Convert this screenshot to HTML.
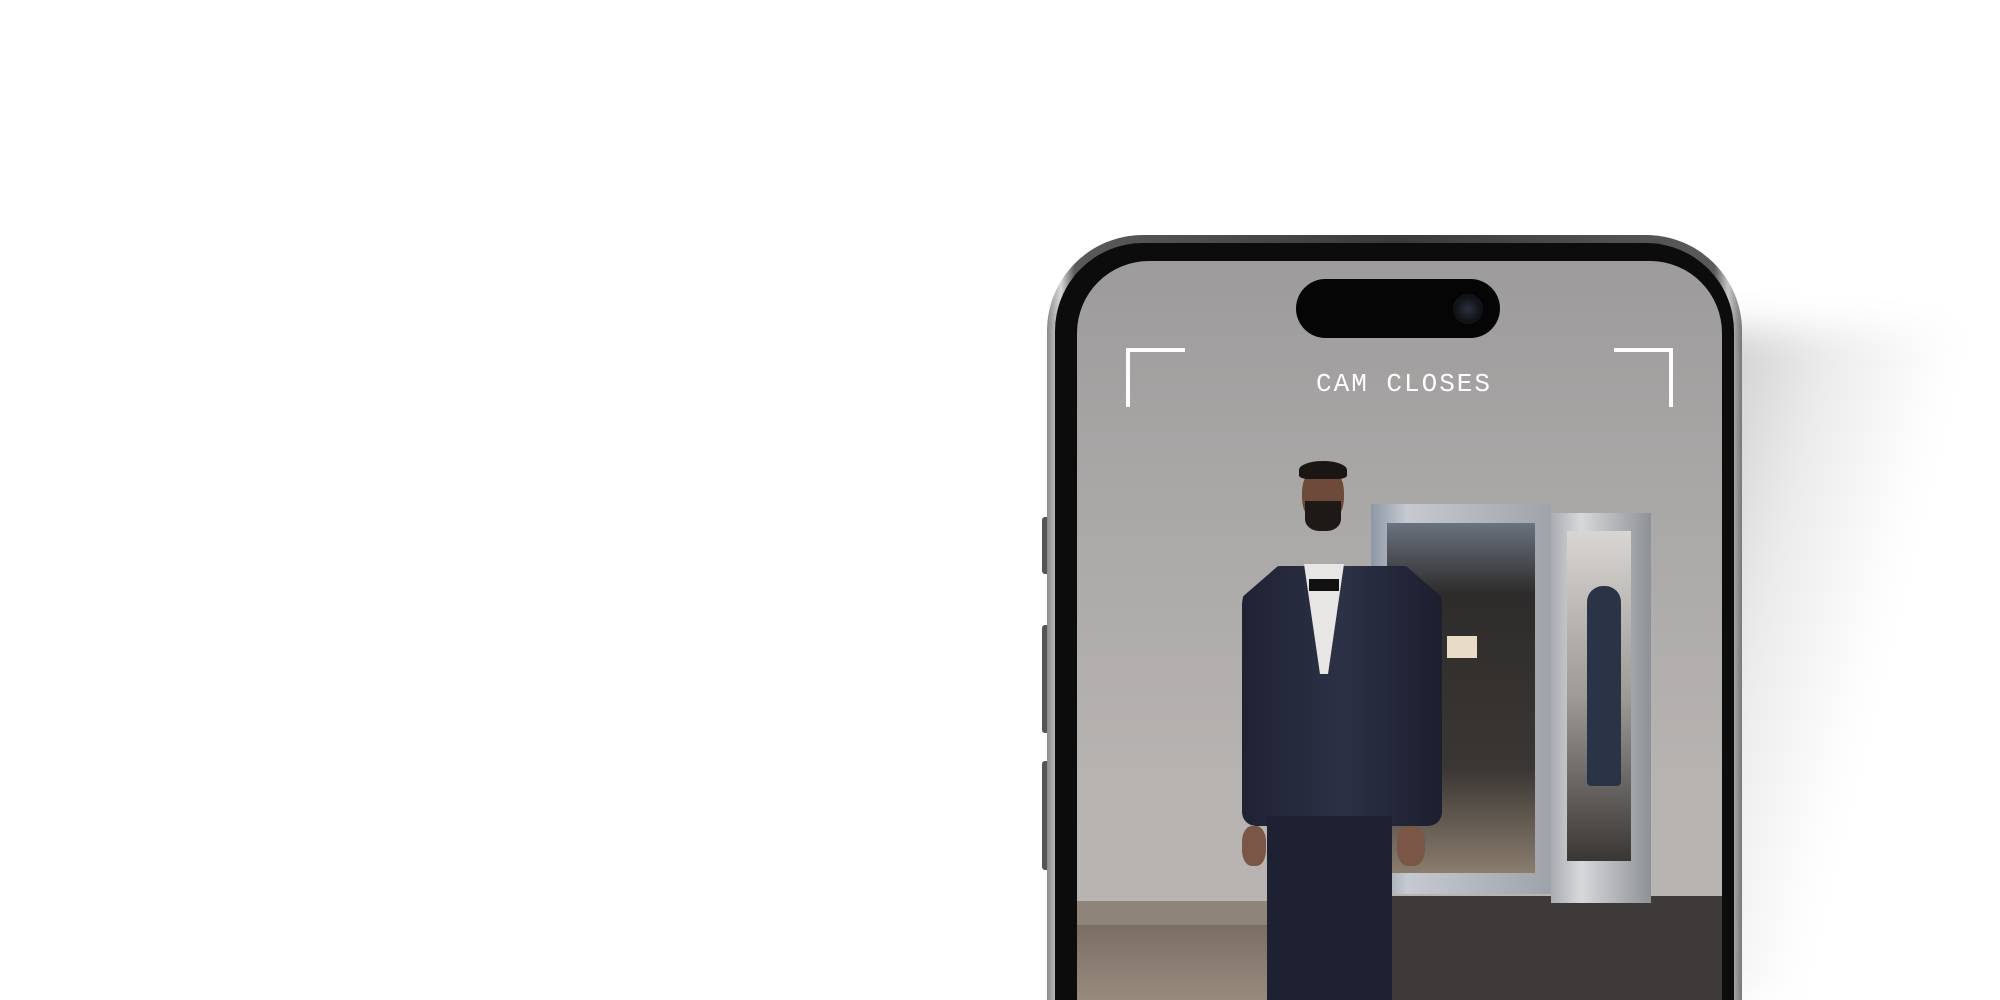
<!DOCTYPE html>
<html><head><meta charset="utf-8"><style>
html,body{margin:0;padding:0;width:2000px;height:1000px;overflow:hidden;background:#fff;position:relative;font-family:"Liberation Sans",sans-serif}
.abs{position:absolute}
</style></head><body>
<div class="abs" style="left:0;top:0;width:2000px;height:1000px;overflow:hidden">
<!-- shadow -->
<div class="abs" style="left:1700px;top:330px;width:260px;height:670px;background:linear-gradient(90deg,rgba(0,0,0,0.22),rgba(0,0,0,0.08) 50%,rgba(0,0,0,0));filter:blur(18px);transform:skewX(-14deg);transform-origin:top left"></div>
<!-- side buttons -->
<div class="abs" style="left:1042px;top:517px;width:8px;height:57px;background:#555;border-radius:3px"></div>
<div class="abs" style="left:1042px;top:625px;width:8px;height:108px;background:#555;border-radius:3px"></div>
<div class="abs" style="left:1042px;top:761px;width:8px;height:109px;background:#555;border-radius:3px"></div>
<!-- phone body -->
<div class="abs" style="left:1047px;top:235px;width:695px;height:765px;border-radius:96px 96px 0 0;background:linear-gradient(90deg,#8a8a8a,#d8d8d8 2%,#5a5a5a 4%,#3a3a3a 50%,#5a5a5a 96%,#c8c8c8 98%,#777);"></div>
<div class="abs" style="left:1055px;top:243px;width:679px;height:757px;border-radius:88px 88px 0 0;background:#0c0c0c"></div>
<!-- screen -->
<div class="abs" style="left:1077px;top:261px;width:645px;height:739px;border-radius:72px 72px 0 0;overflow:hidden;background:linear-gradient(180deg,#9d9b9b 0%,#a9a7a6 30%,#b6b3b1 70%,#b9b5b2 100%)">
  <div class="abs" style="left:0;top:640px;width:645px;height:24px;background:#8f8479"></div>
  <div class="abs" style="left:0;top:664px;width:645px;height:80px;background:linear-gradient(180deg,#7a6e64,#9a8c7f)"></div>
  <div class="abs" style="left:270px;top:635px;width:400px;height:110px;background:#3d3a39;transform:skewX(-10deg)"></div>
  <!-- mirror -->
  <div class="abs" style="left:294px;top:243px;width:180px;height:390px;background:linear-gradient(90deg,#8d97a5,#c6cad0 20%,#9ea3aa)"></div>
  <div class="abs" style="left:310px;top:262px;width:148px;height:350px;background:linear-gradient(180deg,#6a7380,#2e2c2b 20%,#3a3633 70%,#8a7d6e)"></div>
  <div class="abs" style="left:474px;top:252px;width:100px;height:390px;background:linear-gradient(90deg,#a9adb3,#d7d8da 30%,#8e9197)"></div>
  <div class="abs" style="left:490px;top:270px;width:64px;height:330px;background:linear-gradient(180deg,#d8d5d2,#9e9a96 50%,#3a3634)"></div>
  <div class="abs" style="left:510px;top:325px;width:34px;height:200px;background:#2b3347;border-radius:16px 16px 4px 4px"></div>
  <div class="abs" style="left:370px;top:375px;width:30px;height:22px;background:#e8dcc6"></div>
  <!-- man -->
  <div class="abs" style="left:225px;top:205px;width:42px;height:58px;border-radius:45%;background:#6d4a3a"></div>
  <div class="abs" style="left:222px;top:200px;width:48px;height:18px;border-radius:50% 50% 20% 20%;background:#1b1614"></div>
  <div class="abs" style="left:228px;top:240px;width:36px;height:30px;border-radius:0 0 40% 40%;background:#1e1917"></div>
  <div class="abs" style="left:165px;top:305px;width:200px;height:260px;border-radius:40px 40px 14px 14px;background:linear-gradient(90deg,#1f2233,#2d3146 50%,#1c1f2e);clip-path:polygon(18% 0,82% 0,100% 12%,100% 100%,0 100%,0 12%)"></div>
  <div class="abs" style="left:227px;top:303px;width:40px;height:110px;background:#e8e6e4;clip-path:polygon(0 0,100% 0,60% 100%,40% 100%)"></div>
  <div class="abs" style="left:232px;top:318px;width:30px;height:12px;background:#111"></div>
  <div class="abs" style="left:190px;top:555px;width:125px;height:200px;background:#1e2131"></div>
  <div class="abs" style="left:165px;top:565px;width:24px;height:40px;border-radius:40%;background:#7a5646"></div>
  <div class="abs" style="left:320px;top:565px;width:28px;height:40px;border-radius:40%;background:#7a5646"></div>
  <!-- dynamic island -->
  <div class="abs" style="left:219px;top:18px;width:204px;height:59px;border-radius:30px;background:#050505"></div>
  <div class="abs" style="left:376px;top:33px;width:30px;height:30px;border-radius:50%;background:radial-gradient(circle,#2a3040,#101216 60%,#1b1b1b)"></div>
  <!-- brackets -->
  <div class="abs" style="left:49px;top:87px;width:55px;height:55px;border-left:4px solid #fff;border-top:4px solid #fff"></div>
  <div class="abs" style="left:537px;top:87px;width:55px;height:55px;border-right:4px solid #fff;border-top:4px solid #fff"></div>
  <div class="abs" style="left:0;top:108px;width:654px;text-align:center;color:#fff;font-family:'Liberation Mono',monospace;font-size:26px;letter-spacing:2px">CAM CLOSES</div>
</div>
</div>
</body></html>
